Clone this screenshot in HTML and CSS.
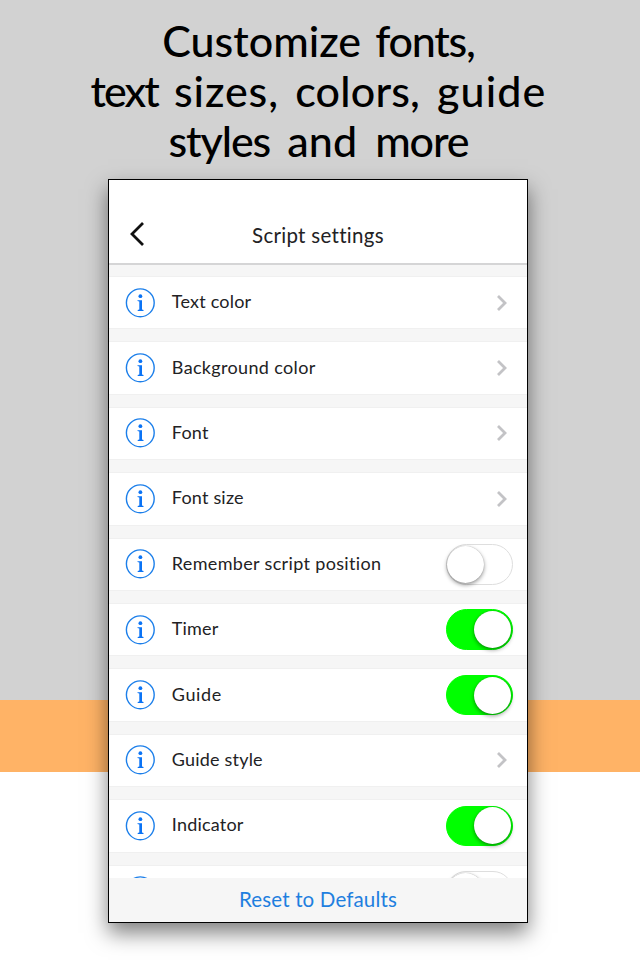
FILE: index.html
```html
<!DOCTYPE html>
<html lang="en">
<head>
<meta charset="utf-8">
<title>Script settings</title>
<link rel="stylesheet" href="styles.css">
</head>
<body>
<svg class="defs" width="0" height="0" aria-hidden="true">
  <symbol id="info" viewBox="0 0 30 30">
    <circle cx="15.3" cy="14.8" r="13.9" fill="none" stroke="#1c7fea" stroke-width="1.4"/>
    <circle cx="15.4" cy="8.2" r="1.9" fill="#0a73f5"/>
    <path d="M12.5 12.2H17v9.3l1.5.5v.9h-5.8V22l1.6-.5v-8l-1.8-.4z" fill="#0a73f5"/>
  </symbol>
  <symbol id="chev" viewBox="0 0 12 18">
    <path d="M2 2l7 7-7 7" fill="none" stroke="#c3c3c6" stroke-width="2.8"/>
  </symbol>
</svg>
<h1 class="headline">
  <span class="line"><span class="w-customize">Customize</span> <span class="w-fonts">fonts,</span></span>
  <span class="line"><span class="w-text">text</span> <span class="w-sizes">sizes,</span> <span class="w-colors">colors,</span> <span class="w-guide">guide</span></span>
  <span class="line"><span class="w-styles">styles</span> <span class="w-and">and</span> <span class="w-more">more</span></span>
</h1>
<main class="phone">
  <header class="bar">
    <svg class="back" viewBox="0 0 16 26"><path d="M14 2L3 13l11 11" fill="none" stroke="#111" stroke-width="2.8"/></svg>
    <span class="title">Script settings</span>
  </header>
  <div class="list">
    <div class="row"><svg class="info"><use href="#info"/></svg><span class="label">Text color</span><svg class="chev"><use href="#chev"/></svg></div>
    <div class="row"><svg class="info"><use href="#info"/></svg><span class="label wide">Background color</span><svg class="chev"><use href="#chev"/></svg></div>
    <div class="row"><svg class="info"><use href="#info"/></svg><span class="label">Font</span><svg class="chev"><use href="#chev"/></svg></div>
    <div class="row"><svg class="info"><use href="#info"/></svg><span class="label">Font size</span><svg class="chev"><use href="#chev"/></svg></div>
    <div class="row"><svg class="info"><use href="#info"/></svg><span class="label wide">Remember script position</span><span class="switch"><i></i></span></div>
    <div class="row"><svg class="info"><use href="#info"/></svg><span class="label">Timer</span><span class="switch on"><i></i></span></div>
    <div class="row"><svg class="info"><use href="#info"/></svg><span class="label wider">Guide</span><span class="switch on"><i></i></span></div>
    <div class="row"><svg class="info"><use href="#info"/></svg><span class="label">Guide style</span><svg class="chev"><use href="#chev"/></svg></div>
    <div class="row"><svg class="info"><use href="#info"/></svg><span class="label">Indicator</span><span class="switch on"><i></i></span></div>
    <div class="row"><svg class="info"><use href="#info"/></svg><span class="label"></span><span class="switch"><i></i></span></div>
  </div>
  <footer class="reset">Reset to Defaults</footer>
</main>
</body>
</html>
```
FILE: styles.css
```css
* { box-sizing: border-box; }
body {
  margin: 0;
  width: 640px;
  height: 960px;
  overflow: hidden;
  font-family: Lato, "Liberation Sans", sans-serif;
  background: linear-gradient(#d2d2d2 700px, #ffb366 700px, #ffb366 772px, #fff 772px);
}
.defs { display: block; height: 0; }
.headline {
  margin: 0;
  height: 180px;
  padding: 16px 3px 0 0;
  display: flex;
  flex-direction: column;
  align-items: center;
  font-size: 43px;
  font-weight: 500;
  line-height: 50px;
  color: #000;
  white-space: nowrap;
}
.w-customize { letter-spacing: 0; }
.w-fonts { letter-spacing: -1.2px; margin-left: 3.2px; }
.w-text { letter-spacing: -2px; }
.w-sizes { letter-spacing: .9px; margin-left: 5.4px; }
.w-colors { letter-spacing: .2px; margin-left: 5.4px; }
.w-guide { letter-spacing: 1.1px; margin-left: 6px; }
.w-styles { letter-spacing: -1.1px; }
.w-and { letter-spacing: .1px; margin-left: 6.2px; }
.w-more { letter-spacing: -1.1px; margin-left: 7px; }
.phone {
  width: 420px;
  height: 744px;
  margin: -1px auto 0 108px;
  border: 1.5px solid #000;
  background: #f6f6f6;
  display: flex;
  flex-direction: column;
  overflow: hidden;
  box-shadow: 0 10px 20px rgba(0, 0, 0, .5);
  color: #222224;
}
.bar {
  flex: none;
  height: 85px;
  background: #fff;
  border-bottom: 2px solid #d5d5d6;
  display: grid;
  grid-template-columns: 60px 1fr 60px;
  padding-top: 31px;
}
.back { width: 16px; height: 26px; margin: 9.5px 0 0 20px; }
.title { text-align: center; font-size: 20.5px; line-height: 48px; letter-spacing: .3px; }
.list {
  flex: none;
  height: 613px;
  padding-top: 12px;
  overflow: hidden;
}
.row {
  height: 51.4px;
  margin-bottom: 14px;
  background: #fff;
  box-shadow: 0 0 0 1px #f0f0f0;
  display: flex;
  align-items: center;
  padding: 0 14.5px 0 16px;
}
.info { width: 30px; height: 30px; margin-right: 16.8px; flex: none; }
.label { flex: 1; font-size: 18px; line-height: 24px; padding-bottom: 3px; letter-spacing: .2px; white-space: nowrap; }
.label.wide { letter-spacing: .34px; }
.label.wider { letter-spacing: .6px; }
.chev { width: 12px; height: 18px; margin-right: 4.2px; }
.switch {
  width: 67px;
  height: 40.5px;
  border: 1.5px solid #dedede;
  border-radius: 21px;
  display: flex;
  align-items: center;
  background: #fff;
}
.switch i {
  width: 37px;
  height: 37px;
  border-radius: 50%;
  background: #fff;
  box-shadow: 0 2px 4px rgba(0, 0, 0, .4), 0 0 1px rgba(0, 0, 0, .3);
}
.switch.on { background: #0f0; border-color: #0f0; justify-content: flex-end; padding-right: 1px; }
.reset {
  flex: 1;
  background: #f6f6f6;
  text-align: center;
  font-size: 20.5px;
  line-height: 43px;
  letter-spacing: .15px;
  color: #1f7fdf;
}
```
